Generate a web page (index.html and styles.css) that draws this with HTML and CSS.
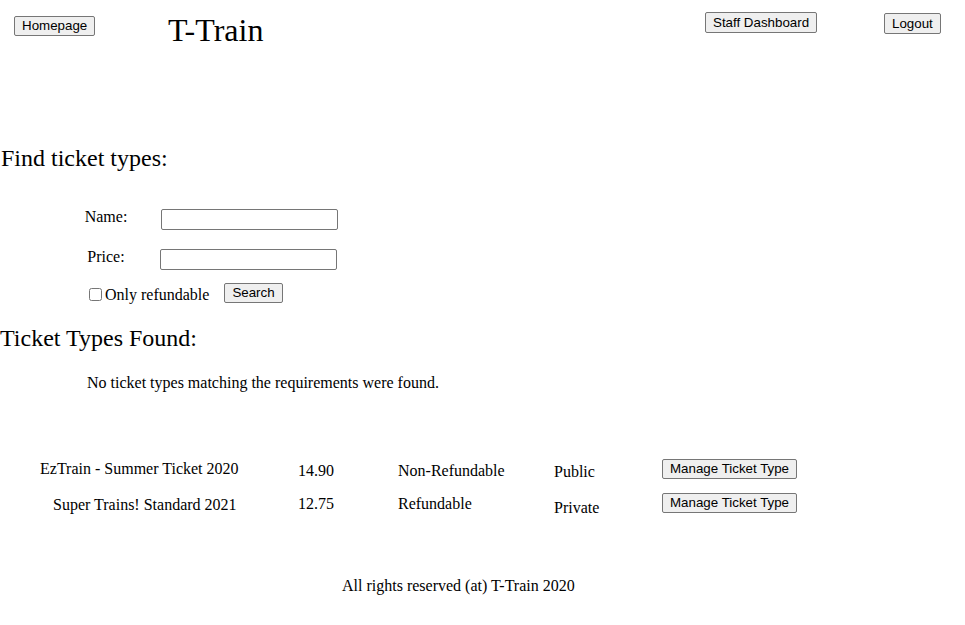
FILE: index.html
```html
<!DOCTYPE html>
<html>
<head>
<meta charset="utf-8">
<title>T-Train</title>
<link rel="stylesheet" href="styles.css">
</head>
<body>
<header class="header">
  <button class="btn home">Homepage</button>
  <h1 class="title">T-Train</h1>
  <button class="btn staff">Staff Dashboard</button>
  <button class="btn logout">Logout</button>
</header>

<h2 class="section-title find">Find ticket types:</h2>
<form class="search-form">
  <div class="field field-name">
    <label class="field-label">Name:</label>
    <input class="field-input" type="text">
  </div>
  <div class="field field-price">
    <label class="field-label">Price:</label>
    <input class="field-input" type="text">
  </div>
  <div class="options">
    <input class="check" type="checkbox">
    <span class="check-label">Only refundable</span>
    <button class="btn search" type="button">Search</button>
  </div>
</form>

<h2 class="section-title found">Ticket Types Found:</h2>
<p class="empty">No ticket types matching the requirements were found.</p>

<div class="results">
  <div class="result-row row-a">
    <div class="cell name">EzTrain - Summer Ticket 2020</div>
    <div class="cell price">14.90</div>
    <div class="cell refund">Non-Refundable</div>
    <div class="cell vis">Public</div>
    <div class="cell action"><button class="btn manage">Manage Ticket Type</button></div>
  </div>
  <div class="result-row row-b">
    <div class="cell name">Super Trains! Standard 2021</div>
    <div class="cell price">12.75</div>
    <div class="cell refund">Refundable</div>
    <div class="cell vis">Private</div>
    <div class="cell action"><button class="btn manage">Manage Ticket Type</button></div>
  </div>
</div>

<footer class="footer">All rights reserved (at) T-Train 2020</footer>
</body>
</html>
```
FILE: styles.css
```css
html, body {
  margin: 0;
  padding: 0;
  background: #ffffff;
}
body {
  font-family: "Liberation Serif", "Times New Roman", serif;
  font-size: 16px;
  line-height: 18px;
  color: #000000;
  width: 965px;
}

.btn {
  font-family: "Liberation Sans", Arial, sans-serif;
  font-size: 13.333px;
  line-height: 16px;
  padding: 1px 7px;
  margin: 0;
  background: #efefef;
  border: 1px solid #767676;
  border-radius: 2px;
  color: #000000;
  height: 21px;
  box-sizing: border-box;
}

.header {
  display: grid;
  grid-template-columns: 154px 537px 179px auto;
  padding-left: 14px;
  align-items: start;
  height: 48px;
}
.home { margin-top: 16px; justify-self: start; height: 20px; }
.title {
  margin: 13px 0 0 0;
  font-size: 32px;
  line-height: 34px;
  font-weight: normal;
}
.staff { margin-top: 12px; justify-self: start; }
.logout { margin-top: 13px; justify-self: start; }

.section-title {
  font-size: 24px;
  line-height: 28px;
  font-weight: normal;
  margin: 0;
}
.find { margin-top: 96px; margin-left: 1px; }

.search-form {
  margin-top: 37px;
  display: flex;
  flex-direction: column;
}
.field {
  display: flex;
  align-items: flex-start;
  height: 21px;
}
.field-price { margin-top: 19px; }
.field-label {
  line-height: 16px;
  width: 72px;
  text-align: center;
  margin-left: 70px;
}
.field-name .field-input { margin-left: 19px; }
.field-price .field-input { margin-left: 18px; }
.field-input {
  width: 177px;
  height: 21px;
  box-sizing: border-box;
  margin: 0;
  border: 1px solid #767676;
  border-radius: 2px;
  padding: 1px 2px;
  font-family: "Liberation Sans", Arial, sans-serif;
  font-size: 13.333px;
}
.options {
  margin-top: 13px;
  display: flex;
  align-items: flex-start;
  height: 20px;
}
.check {
  margin: 5px 0 0 89px;
  width: 13px;
  height: 13px;
}
.check-label {
  margin: 4px 0 0 3px;
  line-height: 16px;
}
.search {
  margin-left: 15px;
  height: 20px;
}

.found { margin-top: 21px; }
.empty {
  margin: 22px 0 0 87px;
}

.results {
  margin-top: 67px;
  display: flex;
  flex-direction: column;
  gap: 13px;
}
.result-row {
  display: grid;
  grid-template-columns: 250px 116px 156px 140px auto;
  align-items: start;
  height: 21px;
}
.cell { white-space: nowrap; }
.name { padding-left: 40px; }
.row-b .name { padding-left: 53px; }
.price { padding-left: 48px; }
.refund { padding-left: 32px; }
.vis { padding-left: 32px; }
.action { padding-left: 0; }
.manage { height: 20px; }

.row-a .name { margin-top: 1px; }
.row-a .price, .row-a .refund { margin-top: 3px; }
.row-a .vis { margin-top: 4px; }
.row-a .action { margin-top: 0; }
.row-b .name { margin-top: 3px; }
.row-b .price, .row-b .refund { margin-top: 2px; }
.row-b .vis { margin-top: 6px; }

.footer {
  margin: 63px 0 0 342px;
}
```
